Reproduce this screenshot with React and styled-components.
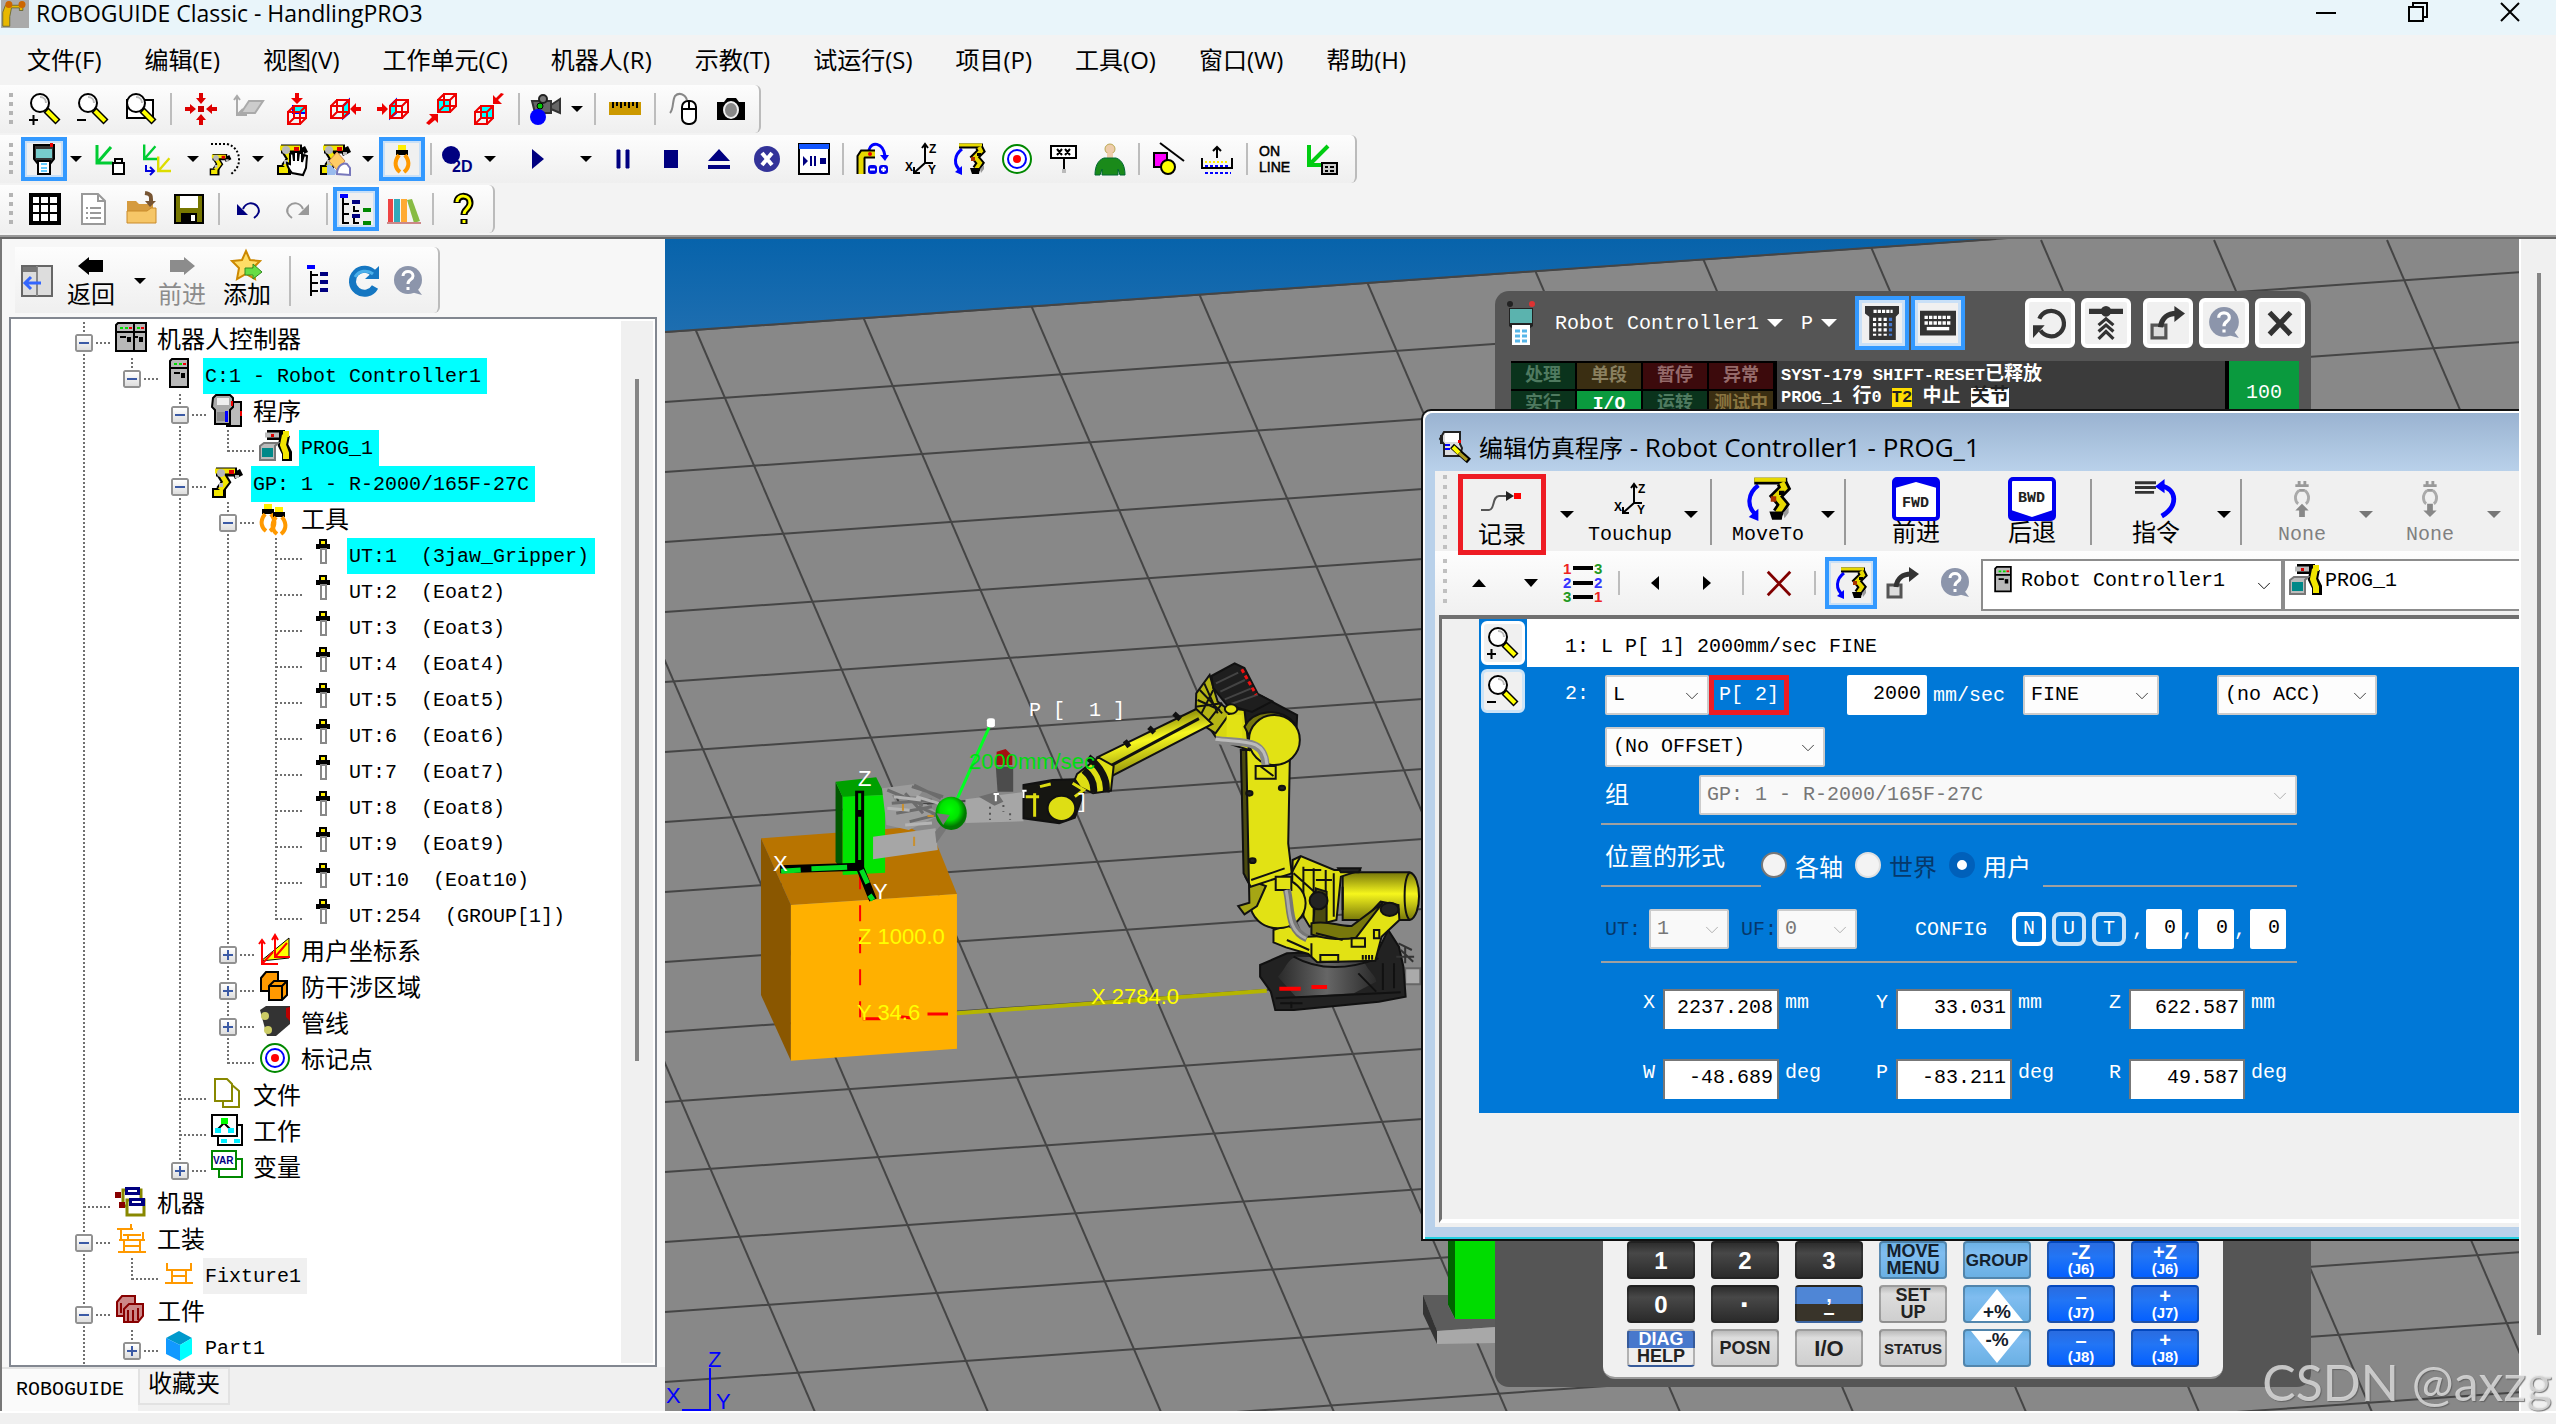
import React, { useState } from 'react';
import styled, { createGlobalStyle, css } from 'styled-components';
import { ChevronDown } from 'lucide-react';

const mono = '"Liberation Mono", "Noto Sans CJK SC", monospace';
const ui = '"Open Sans", "Noto Sans CJK SC", sans-serif';

const GlobalStyle = createGlobalStyle`
  * {
    box-sizing: border-box;
  }
  body {
    margin: 0;
    background: #f0f0f0;
    font-family: ${mono};
    font-size: 20px;
    color: #000;
    overflow: hidden;
  }
  button, input, select {
    font: inherit;
    color: inherit;
    margin: 0;
    padding: 0;
    border: 0;
    background: none;
  }
`;

/* ---------- frame ---------- */

const Page = styled.div`
  display: flex;
  flex-direction: column;
  height: 100vh;
`;

const TitleBar = styled.header`
  display: flex;
  align-items: flex-start;
  height: 35px;
  background: #e9f5fa;
  font-family: ${ui};
`;

const AppTitle = styled.h1`
  flex: 1;
  margin: 0 0 0 6px;
  font-size: 23px;
  font-weight: 400;
  line-height: 26px;
`;

const CaptionButton = styled.button`
  width: 92px;
  height: 24px;
  display: flex;
  align-items: center;
  justify-content: center;
`;

const MenuBar = styled.nav`
  display: flex;
  align-items: center;
  gap: 43px;
  height: 50px;
  padding-left: 27px;
  background: #f3f3f3;
  font-family: ${ui};
`;

const MenuItem = styled.button`
  font-size: 24px;
  line-height: 32px;
  white-space: nowrap;
`;

const ToolArea = styled.div`
  display: flex;
  flex-direction: column;
  align-items: flex-start;
  gap: 2px;
  padding-bottom: 2px;
  background: #f3f3f3;
  border-bottom: 2px solid #999;
  box-shadow: 0 2px 0 #666;
  z-index: 1;
`;

const Strip = styled.div`
  display: flex;
  align-items: center;
  height: 48px;
  padding: 0 6px 0 21px;
  border-right: 2px solid #bbb;
  border-radius: 0 6px 6px 0;
  background:
    repeating-linear-gradient(#b4b4b4 0 4px, transparent 4px 9px) 9px 8px / 4px 32px no-repeat,
    linear-gradient(#fdfdfd, #efefef);
`;

const ToolButton = styled.button`
  display: flex;
  align-items: center;
  justify-content: center;
  flex: none;
  width: ${p => p.$w || 48}px;
  height: 44px;
  ${p => p.$active && css`
    width: ${p.$w || 46}px;
    border: 4px solid #3399ff;
    box-shadow: inset 0 0 0 2px #c9e0f7;
    background: #f0f0f0;
  `}
`;

const ToolSep = styled.span`
  width: 12px;
  height: 32px;
  background: linear-gradient(#bdbdbd, #bdbdbd) 5px 0 / 2px 100% no-repeat;
`;

const Arrow = styled.span`
  display: inline-block;
  border: 6px solid transparent;
  border-top: 6px solid ${p => p.$color || '#000'};
  border-bottom: 0;
`;

const Main = styled.main`
  display: grid;
  grid-template-columns: 665px 1fr 37px;
  flex: 1;
  min-height: 0;
  padding-top: 2px;
`;

const StatusBar = styled.footer`
  height: 13px;
  border-top: 2px solid #fff;
  background: #f0f0f0;
`;

const Rail = styled.div`
  display: flex;
  justify-content: center;
  padding: 34px 0 76px;
  border-left: 2px solid #fff;
  background: #f0f0f0;
`;

const Thumb = styled.span`
  width: 4px;
  height: ${p => p.$h || '100%'};
  background: #858585;
`;

/* ---------- cell browser ---------- */

const Side = styled.aside`
  display: flex;
  flex-direction: column;
  min-height: 0;
  padding: 8px 8px 0;
  border-left: 2px solid #777;
  background: #f7f7f7;
`;

const SideTools = styled.div`
  display: flex;
  align-items: center;
  align-self: flex-start;
  height: 66px;
  margin: 0 0 4px 5px;
  padding: 2px 5px 0 6px;
  border-right: 2px solid #bbb;
  border-radius: 0 6px 6px 0;
  background: linear-gradient(#fdfdfd, #efefef);
`;

const SideButton = styled.button`
  display: grid;
  grid-template-rows: ${p => (p.$stack ? '32px 30px' : '62px')};
  align-items: center;
  justify-items: center;
  width: ${p => p.$w}px;
  height: 62px;
  font-size: 24px;
  line-height: 30px;
  white-space: nowrap;
  color: ${p => (p.disabled ? '#8c8c8c' : '#000')};
`;

const SideSep = styled.span`
  width: 2px;
  height: 50px;
  margin-left: 8px;
  background: #bdbdbd;
`;

const TreeBox = styled.div`
  display: flex;
  flex: 1;
  min-height: 0;
  overflow: hidden;
  margin-left: -1px;
  padding: 2px;
  border: 2px solid #828790;
  background: #fff;
`;

const Tree = styled.ul`
  flex: 1;
  margin: 0;
  padding: 1px 0 0 47px;
  list-style: none;
`;

const TreeScroll = styled.div`
  display: flex;
  justify-content: center;
  width: 32px;
  padding-top: 58px;
  background: #f0f0f0;
`;

const TreeRow = styled.li`
  display: flex;
  height: 36px;
`;

const dotsY = 'repeating-linear-gradient(#707070 0 2px, transparent 2px 4px)';
const dotsX = 'repeating-linear-gradient(90deg, #707070 0 2px, transparent 2px 4px)';

const Guide = styled.span`
  width: 48px;
  background: ${p => (p.$line ? `${dotsY} 23px 0 / 2px 36px no-repeat` : 'none')};
`;

const Branch = styled.span`
  width: 55px;
  padding: 12px 0 0 15px;
  background:
    ${dotsY} 23px 0 / 2px ${p => (p.$last ? 22 : 36)}px no-repeat,
    ${dotsX} 24px 20px / 28px 2px no-repeat;
`;

const Expander = styled.button`
  display: flex;
  align-items: center;
  justify-content: center;
  width: 18px;
  height: 18px;
  border: 2px solid #919191;
  border-radius: 2px;
  background: linear-gradient(#fff, #dedede);
  outline: 2px solid #fff;
`;

const TreeLabel = styled.span`
  height: 36px;
  margin-left: 8px;
  padding: ${p => (p.$cjk ? 2 : 0)}px 6px 0 2px;
  line-height: ${p => (p.$cjk ? 36 : 38)}px;
  white-space: pre;
  font-size: ${p => (p.$cjk ? 24 : 20)}px;
  background: ${p => p.$bg || 'transparent'};
`;

const Tabs = styled.div`
  display: flex;
  align-items: flex-start;
  height: 44px;
  margin: 0 -8px;
  background: #f0f0f0;
`;

const Tab = styled.button`
  height: ${p => (p.$on ? 44 : 38)}px;
  padding: 0 ${p => (p.$on ? 14 : 8)}px;
  font-size: ${p => (p.$on ? 20 : 24)}px;
  background: ${p => (p.$on ? '#fafafa' : '#f3f3f3')};
  border: ${p => (p.$on ? 0 : '2px solid #e2e2e2')};
  border-top: 2px solid #e2e2e2;
  line-height: 34px;
`;

/* ---------- 3D view ---------- */

const View = styled.section`
  position: relative;
  overflow: hidden;
  background: #888;
`;

const SceneSvg = styled.svg`
  position: absolute;
  inset: 0;
  width: 100%;
  height: 100%;

  .thin * {
    vector-effect: non-scaling-stroke;
  }
  text {
    font: 22px "Liberation Sans", sans-serif;
  }
  .mono {
    font: 20px "Liberation Mono", monospace;
    white-space: pre;
  }
`;

/* ---------- teach pendant ---------- */

const Pendant = styled.section`
  position: absolute;
  left: 830px;
  top: 52px;
  bottom: 24px;
  width: 816px;
  display: flex;
  flex-direction: column;
  border-radius: 14px;
  background: #555;
`;

const PendantHead = styled.div`
  display: flex;
  align-items: center;
  height: 64px;
  margin-bottom: 6px;
  padding: 0 6px 0 12px;
  color: #fff;
`;

const PendantMenu = styled.button`
  display: flex;
  align-items: center;
  gap: 8px;
  margin-left: 18px;

  ${Arrow} {
    border-width: 8px;
    border-top-color: #fff;
    border-bottom-width: 0;
  }
`;

const PendantToggle = styled.button`
  display: flex;
  align-items: center;
  justify-content: center;
  width: 54px;
  height: 54px;
  margin-left: ${p => (p.$first ? 18 : 2)}px;
  border: 4px solid #3399ff;
  box-shadow: inset 0 0 0 3px #c9e0f7;
  background: #f0f0f0;
`;

const PendantButtons = styled.div`
  display: flex;
  gap: 6px;
  margin-left: auto;
`;

const PendantButton = styled.button`
  display: flex;
  align-items: center;
  justify-content: center;
  width: 50px;
  height: 50px;
  margin-left: ${p => (p.$gap ? 6 : 0)}px;
  border: 4px solid #fff;
  border-radius: 6px;
  background: #f0f0f0;
`;

const Screen = styled.div`
  display: flex;
  flex: 1;
  min-height: 0;
  margin: 0 12px 0 16px;
  background: #000;
`;

const Lamps = styled.div`
  display: grid;
  grid-template-columns: repeat(4, 64px);
  grid-auto-rows: 26px;
  gap: 2px;
  padding-top: 2px;
  margin-right: 4px;
`;

const Lamp = styled.span`
  font-size: 18px;
  font-weight: 700;
  line-height: 26px;
  text-align: center;
  color: ${p => p.$color};
  background: ${p => p.$bg};
`;

const Message = styled.div`
  flex: 1;
  padding: 4px;
  font-size: 17px;
  font-weight: 700;
  line-height: 22px;
  color: #fff;
  background: #3b3b3b;
  white-space: pre;

  big {
    font-size: 19px;
    line-height: 20px;
  }
`;

const Flag = styled.mark`
  color: #222;
  background: ${p => p.$bg};
`;

const Override = styled.div`
  width: 70px;
  margin-left: 4px;
  padding-top: 20px;
  line-height: 24px;
  text-align: center;
  color: #fff;
  background: #0a9a3e;
`;

const Keypad = styled.div`
  display: grid;
  grid-template-columns: repeat(7, 68px);
  grid-auto-rows: 38px;
  gap: 6px 16px;
  margin: 0 88px 8px 108px;
  padding: 6px 24px 10px;
  border-bottom: 2px solid #999;
  border-radius: 0 0 12px 12px;
  background: #f0f0f0;
  font-family: "Liberation Sans", sans-serif;
`;

const keyLook = {
  dark: 'background: linear-gradient(#2d2d2d, #484848 30%, #2b2b2b); color: #fff;',
  gray: 'background: linear-gradient(#bbb, #ddd 20%, #cfcfcf); color: #222;',
  sky: 'background: linear-gradient(#6cb2e6, #80bdf0 30%, #6ab0e4); color: #14202c;',
  blue: 'background: linear-gradient(#2a6ce0, #2275f5 40%, #0460ff); color: #fff;',
  diag: 'background: linear-gradient(#4878cc 50%, #eee 50%); color: #fff;',
  comma: 'background: linear-gradient(#4f86d6 50%, #39342a 50%); color: #fff;',
};

const Key = styled.button`
  display: flex;
  flex-direction: column;
  align-items: center;
  justify-content: center;
  overflow: hidden;
  border-radius: 4px;
  border: 2px solid rgba(0, 0, 0, 0.25);
  font-size: ${p => p.$size || 17}px;
  font-weight: 700;
  line-height: ${p => p.$lh || 16}px;
  white-space: nowrap;
  ${p => keyLook[p.$look]}

  small {
    font-size: 15px;
    line-height: 15px;
  }
`;

const DarkText = styled.span`
  color: #222;
`;

// the speed keys carry a white triangle behind their label
const Percent = styled.span`
  display: grid;
  justify-items: center;
  align-items: ${p => (p.$up ? 'end' : 'start')};
  width: 64px;
  height: 34px;
  font-size: 19px;
  line-height: 18px;

  &::before {
    content: '';
    grid-area: 1 / 1;
    width: 52px;
    height: 32px;
    background: #fff;
    clip-path: ${p => (p.$up ? 'polygon(50% 0, 100% 100%, 0 100%)' : 'polygon(0 0, 100% 0, 50% 100%)')};
  }
  span {
    grid-area: 1 / 1;
    z-index: 1;
  }
`;

/* ---------- program editor ---------- */

const Editor = styled.section`
  position: absolute;
  left: 756px;
  right: 0;
  top: 170px;
  display: flex;
  flex-direction: column;
  padding: 2px 0 12px 12px;
  border: solid #111;
  border-width: 2px 0 2px 2px;
  border-radius: 10px 0 0 0;
  background: #b9d1ea;
  box-shadow: inset 2px 2px 0 #fff, inset 0 -2px 0 #22d0e0;
`;

const EditorTitle = styled.h2`
  display: flex;
  align-items: center;
  gap: 8px;
  height: 58px;
  margin: 0 0 0 -10px;
  padding: 10px 0 0 14px;
  border-radius: 8px 0 0 0;
  background: linear-gradient(#9ab3d1, #b9d1ea);
  font-family: ${ui};
  font-size: 24px;
  font-weight: 400;
  white-space: pre;

  span {
    font-size: 26px;
  }
`;

const EditorBody = styled.div`
  background: #f0f0f0;
`;

const grip = 'repeating-linear-gradient(#c0c0c0 0 4px, transparent 4px 10px)';

const BigTools = styled.div`
  display: flex;
  height: 80px;
  padding: 3px 0 0 23px;
  background: ${grip} 8px 4px / 4px 74px no-repeat;
`;

const BigButton = styled.button`
  display: grid;
  grid-template-rows: 44px 28px;
  align-items: center;
  justify-items: center;
  flex: none;
  width: ${p => p.$w}px;
  height: 76px;
  padding-top: 3px;
  font-size: ${p => (p.$cjk ? 24 : 20)}px;
  line-height: 28px;
  white-space: nowrap;
  color: ${p => (p.disabled ? '#808080' : '#000')};
  ${p => p.$marked && css`
    height: 81px;
    padding-top: 0;
    border: 5px solid #ee1c24;
    z-index: 1;
  `}
`;

const BigDrop = styled.button`
  display: flex;
  align-items: center;
  justify-content: center;
  width: ${p => p.$w || 32}px;
  height: 80px;

  ${Arrow} {
    border-width: 7px;
    border-bottom-width: 0;
  }
`;

const BigSep = styled.span`
  width: 14px;
  height: 66px;
  margin-top: 5px;
  background: linear-gradient(#999, #999) 0 0 / 2px 100% no-repeat;
`;

const SmallTools = styled.div`
  display: flex;
  align-items: center;
  height: 64px;
  padding-left: 18px;
  background:
    ${grip} 8px 8px / 4px 46px no-repeat,
    linear-gradient(#fdfdfd, #f0f0f0);
`;

const SmallButton = styled(ToolButton)`
  width: 52px;
  height: 52px;
`;

const SmallSep = styled.span`
  width: 20px;
  height: 24px;
  background: linear-gradient(#bdbdbd, #bdbdbd) 9px 0 / 2px 100% no-repeat;
`;

const Picker = styled.label`
  position: relative;
  display: flex;
  align-items: center;
  flex: ${p => (p.$grow ? '1' : '0 0 302px')};
  height: 52px;
  margin-top: 4px;
  padding: 0 0 10px ${p => (p.$grow ? 4 : 6)}px;
  border: 2px solid #8c8c8c;
  border-right-width: ${p => (p.$grow ? 0 : 2)}px;
  background: #fff;

  select {
    flex: 1;
    height: 38px;
    padding-left: 4px;
    appearance: none;
  }
  svg.lucide {
    position: absolute;
    right: 6px;
    top: 14px;
  }
`;

const ListArea = styled.div`
  display: flex;
  height: 608px;
  margin: 0 0 4px 4px;
  padding-left: 37px;
  border: solid #707070;
  border-width: 4px 0 0 3px;
  border-bottom: 4px solid #fff;
  background: #f0f0f0;
`;

const ZoomColumn = styled.div`
  display: flex;
  flex-direction: column;
  gap: 4px;
  width: 48px;
  height: 494px;
  padding: 2px;
  background: #0078d7;
`;

const ZoomButton = styled.button`
  display: flex;
  align-items: center;
  justify-content: center;
  width: 44px;
  height: 44px;
  border: 3px solid ${p => (p.$pressed ? '#cce4f7' : '#fff')};
  border-radius: 6px;
  background: #f0f0f0;
`;

const Lines = styled.div`
  flex: 1;
`;

const PlainLine = styled.div`
  height: 48px;
  padding: 4px 0 0 38px;
  line-height: 48px;
  white-space: pre;
  background: #fff;
`;

const EditLine = styled.div`
  display: flex;
  height: 446px;
  padding: 8px 0 0 38px;
  color: #fff;
  background: #0078d7;
`;

const LineNo = styled.span`
  width: 36px;
  line-height: 38px;
`;

const Form = styled.form`
  display: flex;
  flex-direction: column;
  width: 696px;
`;

const FieldRow = styled.div`
  display: flex;
  align-items: center;
  flex: none;
  height: 40px;
  padding-left: 4px;
  margin-bottom: ${p => p.$mb || 0}px;
  white-space: pre;

  > * {
    flex: none;
  }
`;

const SelectWrap = styled.span`
  position: relative;
  width: ${p => p.$w}px;
  height: 40px;
  margin-left: ${p => p.$ml || 0}px;
  color: ${p => (p.$off ? '#777' : '#000')};

  select {
    width: 100%;
    height: 40px;
    padding: 0 30px 2px 6px;
    border: 2px solid #ccc;
    border-radius: 2px;
    background: ${p => (p.$off ? '#f9f9f9' : '#fdfdfd')};
    appearance: none;
    opacity: 1;
  }
  svg {
    position: absolute;
    right: 6px;
    top: 10px;
    pointer-events: none;
  }
`;

const PointButton = styled.button`
  width: 80px;
  height: 40px;
  padding-bottom: 2px;
  border: 5px solid #ee1c24;
  white-space: pre;
`;

const TextBox = styled.input`
  width: ${p => p.$w}px;
  height: ${p => p.$h || 40}px;
  margin-left: ${p => p.$ml || 0}px;
  padding: 0 6px 4px 0;
  text-align: right;
  color: #000;
  background: #fff;
  border-radius: 2px;
`;

const Unit = styled.span`
  padding-left: 6px;
`;

const ConfigLabel = styled.span`
  padding: 0 25px 0 58px;
`;

const GroupLabel = styled.label`
  width: 94px;
  padding-bottom: 6px;
  font-size: 24px;
`;

const Rule = styled.hr`
  flex: none;
  width: 100%;
  height: 2px;
  margin: 0;
  border: 0;
  background: #a0a0a0;
`;

const PositionRow = styled.fieldset`
  display: flex;
  flex: none;
  height: 62px;
  min-width: 0;
  margin: 0 0 22px;
  padding: 0;
  border: 0;
  font-size: 24px;
`;

const PositionTitle = styled.span`
  width: 160px;
  padding: 8px 0 0 4px;
  line-height: 52px;
  white-space: nowrap;
  border-bottom: 2px solid #a0a0a0;
`;

const RadioLabel = styled.label`
  display: flex;
  align-items: center;
  gap: 8px;
  width: 94px;
  padding-top: 18px;
  color: ${p => (p.$off ? '#06386b' : '#fff')};

  input {
    appearance: none;
    width: 26px;
    height: 26px;
    border: 2px solid #777;
    border-radius: 50%;
    background: #f3f3f3;
  }
  input:disabled {
    border-color: #e0e0e0;
  }
  input:checked {
    border: 8px solid #0060ba;
    background: #fff;
  }
`;

const PositionEnd = styled.span`
  flex: 1;
  border-bottom: 2px solid #a0a0a0;
`;

const OffLabel = styled.label`
  width: ${p => p.$w}px;
  color: #06386b;
`;

const FlipButton = styled.button`
  width: 34px;
  height: 34px;
  margin-right: 6px;
  border: 4px solid ${p => (p.$on ? '#fff' : '#cce4f7')};
  border-radius: 8px;
  line-height: 24px;
`;

const Coords = styled.div`
  display: grid;
  grid-template-columns: repeat(3, 233px);
  row-gap: 30px;
  padding: 26px 0 0 42px;
`;

const Coord = styled.label`
  display: flex;
  height: 40px;
  line-height: 28px;

  > span:first-child {
    width: 20px;
  }
  input {
    border: 2px solid #777;
    border-bottom: 0;
    border-radius: 0;
    padding: 0 4px 6px 0;
  }
`;

const Watermark = styled.div`
  position: fixed;
  right: 4px;
  bottom: 4px;
  font-family: "Lato", sans-serif;
  font-size: 50px;
  line-height: 76px;
  color: rgba(235, 235, 235, 0.75);
  text-shadow: 1px 1px 1px rgba(90, 90, 90, 0.8);
`;

/* ---------- icons ---------- */

const Svg = ({ s = 32, h, v = 32, vh, children }) => (
  <svg width={s} height={h || s} viewBox={`0 0 ${v} ${vh || v}`} fill="none" overflow="visible" aria-hidden="true">
    {children}
  </svg>
);

const Lens = ({ sign }) => (
  <>
    <path d="M17 17l12 12" stroke="#000" strokeWidth="7" />
    <path d="M18 18l10 10" stroke="#ff0" strokeWidth="4" />
    <circle cx="11" cy="10" r="9" fill="#fff" stroke="#000" strokeWidth="2" />
    <path d="M11 4c4 0 6 3 6 6" stroke="#bbb" strokeWidth="2" />
    {sign && <path d="M0 27h9" stroke="#000" strokeWidth="2" />}
    {sign === '+' && <path d="M4.500 22v10" stroke="#000" strokeWidth="2" />}
  </>
);

const Cube = ({ x = 6, y = 12, face = 'back' }) => (
  <g transform={`translate(${x} ${y})`} strokeWidth="2">
    {face === 'top' && <path d="M6 1h13v7H6z" fill="#0ff" stroke="#00f" />}
    {face === 'right' && <path d="M13 7l6-6v13l-6 5z" fill="#0ff" stroke="#00f" />}
    {face === 'left' && <path d="M1 7l6-6v13l-6 5z" fill="#0ff" stroke="#00f" />}
    {face === 'front' && <path d="M1 7h12v12H1z" fill="#0ff" stroke="#00f" />}
    {face === 'back' && <path d="M7 1h12v12H7z" fill="#0ff" stroke="#00f" />}
    <path d="M1 7h12v12H1zM7 1h12v12H7zM1 7l6-6M13 7l6-6M1 19l6-6M13 19l6-6" stroke="#e00" />
  </g>
);

const MiniRobot = () => (
  <>
    <path d="M10 8l5 8-6 8" stroke="#000" strokeWidth="9" />
    <path d="M5 6h21M25 5l3 6" stroke="#000" strokeWidth="9" />
    <path d="M1 22h14v10H1z" fill="#000" />
    <path d="M10 8l5 8-6 8" stroke="#f2e600" strokeWidth="5" />
    <path d="M4 5h20" stroke="#f2e600" strokeWidth="5" />
    <path d="M3 24h9v6H3z" fill="#f2e600" />
    <circle cx="10" cy="7" r="4" fill="#b8b8b8" />
    <path d="M18 4h5v4h-5z" fill="#d00" />
    <path d="M24 9h4v3h-4zM8 17h4v4H8z" fill="#bbb" />
  </>
);

const AxisTri = ({ c }) => <path d="M4 2v18h16M5 19L18 4M4 8v12h12" stroke={c} strokeWidth="3" />;

const MoveRobot = () => (
  <>
    <path d="M9 6C1 12 0 22 8 28" stroke="#00f" strokeWidth="3" />
    <path d="M9 23v9l-7-3z" fill="#00f" />
    <path d="M6 3h24" stroke="#000" strokeWidth="5" />
    <path d="M26 4l2 4-6 6 5 6-4 6" stroke="#000" strokeWidth="8" />
    <path d="M6 2h23" stroke="#e6d800" strokeWidth="3" />
    <path d="M26 4l2 4-6 6 5 6-4 6" stroke="#e6d800" strokeWidth="4" />
    <path d="M17 25h10l-1 6h-7zM24 10h4v3h-4z" fill="#000" />
    <path d="M18 14h4v4h-4z" fill="#a30" />
    <path d="M27 26l4-4v4l-3 4z" fill="#999" />
  </>
);

const Grippers = ({ x }) => (
  <g transform={`translate(${x} 0)`}>
    <path d="M5 2h8v5H5z" fill="#fe0" />
    <path d="M3 7h12v5H3z" fill="#000" />
    <path d="M6 12c-6 8-3 14 1 17M12 12c6 8 3 14-1 17" stroke="#f90" strokeWidth="4" />
  </g>
);

const Server = ({ x = 0 }) => (
  <g transform={`translate(${x} 0)`}>
    <path d="M1 3l2-2h16v28H1z" fill="#b8b8b8" stroke="#000" strokeWidth="2" />
    <path d="M1 10h18M5 15h6" stroke="#000" strokeWidth="2" />
    <path d="M5 5h3v2H5zM10 5h3v2h-3z" fill="#0d0" />
    <path d="M14 5h3v2h-3z" fill="#e00" />
    <path d="M12 15h4v5h-4z" fill="#000" />
  </g>
);

const Question = () => (
  <>
    <circle cx="16" cy="15" r="14" fill="#8c95ab" />
    <path d="M24 22l6 8-11-3z" fill="#8c95ab" />
    <path d="M11 11c0-6 10-6 10 0 0 4-5 3-5 8M16 22v3" stroke="#fff" strokeWidth="3" />
  </>
);

const icons = {
  app: <><path d="M0 0h32v32H0z" fill="#aaa" /><path d="M2 30V14l3-8h20v6h-4V9H12l-2 10v11z" fill="#e8b800" stroke="#663" strokeWidth="1" /><circle cx="9" cy="5" r="4" fill="#c60" /><circle cx="24" cy="5" r="4" fill="#c60" /></>,
  zoomIn: <Lens sign="+" />,
  zoomOut: <Lens sign="-" />,
  zoomWin: <><path d="M2 7h26v18H2z" fill="#fff" stroke="#000" strokeWidth="2" /><Lens /></>,
  center: <><g fill="#d00"><path d="M14 0h4v5h3l-5 6-5-6h3zM14 32h4v-5h3l-5-6-5 6h3zM0 14v4h5v3l6-5-6-5v3zM32 14v4h-5v3l-6-5 6-5v3z" /></g><path d="M13 13h6v6h-6z" fill="#c00" /></>,
  plane: <><path d="M8 20l8-12h14l-8 12z" fill="#ccc" stroke="#aaa" strokeWidth="2" /><path d="M4 4v18h10M4 22l6-6M1 7l3-4 3 4" stroke="#aaa" strokeWidth="2" /></>,
  top: <><path d="M14 0h4v5h4l-6 6-6-6h4z" fill="#e00" /><Cube x={6} y={12} face="top" /></>,
  right: <><Cube x={1} y={6} face="right" /><path d="M32 14v4h-5v4l-6-6 6-6v4z" fill="#e00" /></>,
  left: <><Cube x={12} y={6} face="left" /><path d="M0 14v4h5v4l6-6-6-6v4z" fill="#e00" /></>,
  front: <><Cube x={12} y={0} face="front" /><path d="M1 30l6-6-3-3h9v9l-3-3-6 5z" fill="#e00" /></>,
  back: <><Cube x={1} y={12} face="back" /><path d="M31 1l-6 6 4 4h-9V2l3 3 5-5z" fill="#e00" /></>,
  video: <><path d="M3 8h19v12H6zM22 12l9-6v14l-9-4z" fill="#666" stroke="#333" strokeWidth="2" /><circle cx="14" cy="6" r="4" fill="#777" stroke="#222" strokeWidth="2" /><circle cx="11" cy="13" r="3" fill="#0c0" stroke="#000" /><circle cx="9" cy="24" r="8" fill="#00f" /></>,
  ruler: <><path d="M0 9h32v13H0z" fill="#c90" /><path d="M4 9v6M8 9v4M12 9v6M16 9v4M20 9v6M24 9v4M28 9v6" stroke="#000" strokeWidth="2" /></>,
  mouse: <><path d="M1 20c4-4 2-12 5-17 4-4 10-2 12 4" stroke="#888" strokeWidth="2" /><rect x="13" y="8" width="14" height="23" rx="6" fill="#fff" stroke="#000" strokeWidth="2" /><path d="M13 16h14M20 8v8" stroke="#000" strokeWidth="2" /></>,
  photo: <><path d="M2 9h7l3-4h9l3 4h6v18H2z" fill="#000" /><ellipse cx="16" cy="17" rx="7" ry="8" fill="#888" stroke="#eee" strokeWidth="2" /></>,
  pendant: <><path d="M6 2h20v14l-4 5H10l-4-5z" fill="#333" stroke="#000" strokeWidth="2" /><path d="M8 6h16v9H8z" fill="#7cc" /><path d="M10 18h12v13H10z" fill="#fff" stroke="#000" strokeWidth="2" /><path d="M13 21h6M13 25h6M13 28h6" stroke="#6cf" strokeWidth="2" /><path d="M22 0h3v4h-3z" fill="#e00" /></>,
  axisLock: <><AxisTri c="#0c3" /><path d="M20 20h11v11H20z" fill="#fff" stroke="#000" strokeWidth="2" /><path d="M22 20v-4h7v4" stroke="#000" strokeWidth="2" /></>,
  axisTwo: <><g transform="scale(.8)"><AxisTri c="#0c3" /></g><g transform="translate(14 12) scale(.8)"><AxisTri c="#dd0" /></g><path d="M5 22v6h7M9 24l4 4-4 4" stroke="#00d" strokeWidth="2" /></>,
  teachRobot: <><g transform="translate(0 10) scale(.7)"><MiniRobot /></g><path d="M2 1h16c8 2 12 8 12 16 0 6-3 10-8 14" stroke="#000" strokeWidth="2" strokeDasharray="2 2" /></>,
  handRobot: <><MiniRobot /><path d="M16 30c-3-4-5-6-5-10l3 1V11l3-1 1 8v-9l4 0v9l1-8h3v9l2-7 3 1-1 12-3 7z" fill="#fff" stroke="#000" strokeWidth="2" /></>,
  handRobot2: <><MiniRobot /><path d="M18 9l8 9-8 9-8-9z" fill="#fc6" stroke="#c85" /><path d="M8 22c4-3 6 4 10 6l-2 4H8z" fill="#9be" /><path d="M18 31c0-8 6-12 10-10l3 4v7z" fill="#fff" stroke="#77b" strokeWidth="2" /></>,
  gripper: <Grippers x={7} />,
  rec2d: <><circle cx="10" cy="12" r="9" fill="#000080" /><text x="11" y="29" fontSize="16" fontFamily="Liberation Sans" fontWeight="700" fill="#000080">2D</text></>,
  play: <path d="M10 6l12 10-12 10z" fill="#000080" />,
  pause: <path d="M10 7h3v18h-3zM19 7h3v18h-3z" fill="#000080" stroke="#000080" />,
  stop: <path d="M9 7h14v18H9z" fill="#000080" />,
  eject: <path d="M16 6l11 12H5zM5 22h22v4H5z" fill="#000080" />,
  abort: <><circle cx="16" cy="16" r="13" fill="#339" /><path d="M11 10l10 12M21 10L11 22" stroke="#fff" strokeWidth="4" /></>,
  runPanel: <><path d="M1 1h30v30H1z" fill="#fff" stroke="#000" strokeWidth="2" /><path d="M1 1h30v5H1z" fill="#15f" /><path d="M5 13l5 5-5 5zM12 13h2v10h-2zM16 13h2v10h-2zM22 15h6v6h-6z" fill="#000080" /></>,
  jogPM: <><path d="M12 7C14-2 26-1 28 13" stroke="#00f" strokeWidth="3" /><path d="M23 12h9l-4 6z" fill="#00f" /><path d="M4 31V14l2-3h12" stroke="#000" strokeWidth="9" /><path d="M4 31V14l2-3h12" stroke="#e6d800" strokeWidth="5" /><circle cx="13" cy="11" r="2" fill="#e00" /><rect x="11" y="22" width="9" height="9" rx="3" fill="#00e" /><rect x="22" y="22" width="9" height="9" rx="3" fill="#00e" /><path d="M13 26.500h5M24 26.500h5M26.500 24v5" stroke="#fff" strokeWidth="2" /></>,
  axes: <><path d="M20 20V2M17 5l3-4 3 4M20 20h8M20 20L10 29M9 24v6h6" stroke="#000" strokeWidth="2" /><g fontSize="12" fontFamily="Liberation Sans" fontWeight="700" fill="#000"><text x="24" y="10">Z</text><text x="0" y="28">X</text><text x="23" y="31">Y</text></g></>,
  moveTo: <MoveRobot />,
  target: <><circle cx="16" cy="16" r="14" fill="#fff" stroke="#080" strokeWidth="2" /><circle cx="16" cy="16" r="9" stroke="#00f" strokeWidth="2" /><circle cx="16" cy="16" r="4" fill="#f00" /></>,
  sign: <><path d="M3 3h25v12H3zM16 15v12" fill="#fff" stroke="#000" strokeWidth="2" /><path d="M9 6l5 6M14 6l-5 6M17 6l5 6M22 6l-5 6" stroke="#000" strokeWidth="2" /><path d="M14 26h4v4h-4z" fill="#bbb" /></>,
  person: <><circle cx="16" cy="6" r="5" fill="#eca" stroke="#ba5" /><path d="M13 10h6v5h-6z" fill="#eca" /><path d="M1 32c0-9 3-15 9-17h12c6 2 9 8 9 17h-5l-2-6v6H8v-6l-2 6z" fill="#1a8a1a" stroke="#063" strokeWidth="1" /></>,
  shapes: <><path d="M1 10h13v14H1z" fill="#f0f" stroke="#000" strokeWidth="2" /><circle cx="15" cy="24" r="7" fill="#ff0" stroke="#000" strokeWidth="2" /><path d="M7 0l24 18" stroke="#000" strokeWidth="2" /></>,
  floor: <><path d="M1 15v10h30V15M16 15V5M12 8l4-4 4 4" stroke="#000" strokeWidth="2" /><path d="M4 19h24" stroke="#fe0" strokeWidth="2" strokeDasharray="2 2" /><path d="M4 23h24M4 30h26" stroke="#00f" strokeWidth="2" strokeDasharray="3 2" /></>,
  online: <g fontSize="14" fontFamily="Liberation Sans" fill="#000" stroke="#000" strokeWidth=".5"><text x="1" y="13">ON</text><text x="1" y="29">LINE</text></g>,
  axisPrint: <><path d="M3 2v20h14M3 22L22 3" stroke="#0c1" strokeWidth="4" /><path d="M16 20h15v11H16z" fill="#ccc" stroke="#000" strokeWidth="2" /><path d="M19 24h3M24 24h4M19 28h3M24 28h4" stroke="#000" strokeWidth="2" /></>,
  grid: <><path d="M2 2h28v28H2z" fill="#fff" stroke="#000" strokeWidth="4" /><path d="M11 2v28M20 2v28M2 11h28M2 20h28" stroke="#000" strokeWidth="2" /></>,
  doc: <><path d="M5 1h16l7 7v23H5z" fill="#fff" stroke="#999" strokeWidth="2" /><path d="M21 1v7h7M9 15h2M9 20h2M9 25h2M13 15h11M13 20h11M13 25h11" stroke="#999" strokeWidth="2" /></>,
  folder: <><path d="M2 8h9l3 3h14v18H2z" fill="#d59b3f" /><path d="M2 30V18h20l4-3h5v15z" fill="#f6c667" stroke="#c98a2b" /><path d="M20 0c7 1 6 4 6 8" stroke="#753" strokeWidth="4" /><path d="M20 8h11l-6 6z" fill="#753" /></>,
  save: <><path d="M2 2h28v28H2z" fill="#770" stroke="#000" strokeWidth="2" /><path d="M7 3h18v12H7z" fill="#fff" /><path d="M8 20h16v10H8z" fill="#000" /><path d="M18 22h4v6h-4z" fill="#fff" /></>,
  undo: <><path d="M10 16c3-7 10-7 14-3 4 5 1 9-3 12" stroke="#000080" strokeWidth="2" /><path d="M4 11v11h11z" fill="#000080" /></>,
  redo: <><path d="M22 16c-3-7-10-7-14-3-4 5-1 9 3 12" stroke="#999" strokeWidth="2" /><path d="M28 11v11H17z" fill="#999" /></>,
  treeView: <><path d="M3 5v25h6M3 11h6M3 21h6M14 13v5h5M14 24v6h5" stroke="#000" strokeWidth="2" /><path d="M0 1h8v4H0z" fill="#00f" /><path d="M12 7h8v4h-8zM12 21h8v4h-8z" fill="#000080" /><path d="M23 15h8v4h-8zM23 28h8v4h-8z" fill="#080" /></>,
  books: <><path d="M1 6h5v23H1z" fill="#e44" /><path d="M7 6h6v23H7z" fill="#3ab" /><path d="M14 6h6v23h-6z" fill="#fa3" /><path d="M20 7l5-1 8 22-6 2z" fill="#8b4" /><path d="M0 30h34" stroke="#c88" strokeWidth="2" /></>,
  help: <><path d="M10 10c0-9 13-9 13 0 0 6-6 6-6 12M17 26v5" stroke="#000" strokeWidth="7" /><path d="M10 9c0-8 13-8 13 1 0 6-6 6-6 11M17 27v3" stroke="#ff0" strokeWidth="3" /></>,
  collapse: <><path d="M1 1h30v30H1z" fill="#ddd" stroke="#666" strokeWidth="2" /><path d="M16 1v30" stroke="#888" strokeWidth="2" /><path d="M2 2h14v5H2z" fill="#777" /><path d="M20 18H4M10 12l-6 6 6 6" stroke="#36f" strokeWidth="3" /></>,
  treeSmall: <><path d="M9 6v25M9 10h7M9 18h7M9 26h7" stroke="#000" strokeWidth="2" /><path d="M5 0h8v4H5z" fill="#00f" /><path d="M18 7h8v4h-8zM18 15h8v4h-8zM18 23h8v4h-8z" fill="#000080" /></>,
  refresh: <><path d="M27 22A12 12 0 1 1 26 9" stroke="#1577c2" strokeWidth="7" /><path d="M31 1v13H17z" fill="#1577c2" /><path d="M25 9A12 12 0 0 0 7 12" stroke="#4cb0ea" strokeWidth="3" /></>,
  question: <Question />,
  servers: <><Server x={12} /><Server /></>,
  server: <Server x={6} />,
  pendants: <><path d="M16 8h14v24H16z" fill="#bbb" stroke="#000" strokeWidth="2" /><path d="M2 4l3-3h14l3 3v9l-3 3v14H4V16l-3-3z" fill="#aaa" stroke="#000" strokeWidth="2" /><path d="M6 4h12v7H6z" fill="#eee" /><path d="M6 18h8v9H6z" fill="#888" /><path d="M14 17h3v11h-3z" fill="#00f" /><path d="M20 7h2v5h-2zM29 17h2v5h-2z" fill="#e00" /></>,
  prog: <><path d="M8 5h18M26 5l-2 10 4 8v8" stroke="#000" strokeWidth="10" /><path d="M24 4h6M26 5l-2 10 3 8v6" stroke="#f2e600" strokeWidth="6" /><path d="M6 5h14" stroke="#bbb" strokeWidth="5" /><path d="M12 4h3v3h-3z" fill="#d00" /><path d="M1 16l4-3h14l-3 3v14H1z" fill="#bbb" stroke="#777" strokeWidth="2" /><path d="M3 18h11v9H3z" fill="#088" /></>,
  robot: <MiniRobot />,
  tools: <><Grippers x={0} /><g transform="translate(2 3)"><Grippers x={9} /></g></>,
  tool: <><path d="M13 2h6v5h-6z" fill="#fe0" stroke="#000" strokeWidth="2" /><path d="M9 6h14v5H9z" fill="#000" /><path d="M14 11h5v14h-5z" fill="#fff" stroke="#888" strokeWidth="2" /></>,
  frames: <><path d="M2 27L30 4v20z" fill="#ff0" stroke="#000" /><path d="M3 8v22h16M3 30L14 18M16 3v20h15M16 23l12-14M0 10l3-4 3 4M13 6l3-5 3 5" stroke="#f00" strokeWidth="2" /></>,
  boxes: <><path d="M2 8l5-6h12v13l-5 6H2z" fill="#f90" stroke="#000" strokeWidth="2" /><path d="M10 16l5-5h13v14l-5 5H10zM10 16h13v14M23 16l5-5" fill="#f90" stroke="#000" strokeWidth="2" /></>,
  pipes: <><path d="M1 4l6-4h24v18l-14 12H8z" fill="#333" /><circle cx="6" cy="10" r="4" fill="#cc6" /><circle cx="9" cy="24" r="4" fill="#cc6" /><path d="M27 2l4-1v14l-4-4z" fill="#b00" /></>,
  files: <><path d="M12 7h9l7 6v16H12z" fill="#fff" stroke="#880" strokeWidth="2" /><path d="M4 1h12l5 5v17H4z" fill="#fff" stroke="#880" strokeWidth="2" /></>,
  jobs: <><path d="M7 11h24v20H7z" fill="#fff" stroke="#000" strokeWidth="2" /><path d="M1 1h25v21H1z" fill="#fff" stroke="#000" strokeWidth="2" /><path d="M13 9l-6 6M13 9l6 6" stroke="#000" strokeWidth="2" /><path d="M10 4h7v6h-7z" fill="#0f0" /><path d="M4 14h6v5H4zM17 14h6v5h-6zM10 25h6v4h-6zM23 25h6v4h-6z" fill="#0ef" /></>,
  vars: <><path d="M8 9h23v18H8z" fill="#fff" stroke="#080" strokeWidth="2" /><path d="M1 1h24v18H1z" fill="#fff" stroke="#080" strokeWidth="2" /><text x="2" y="14" fontSize="10" fontFamily="Liberation Sans" fontWeight="700" fill="#000080">VAR</text></>,
  machines: <><path d="M8 4h18v16H8z" fill="#fff" stroke="#880" strokeWidth="3" /><path d="M12 14h17v15H12z" fill="#fff" stroke="#880" strokeWidth="3" /><path d="M10 1h15v8H10zM14 12h16v8H14z" fill="#000080" /><path d="M0 6h6v6H0zM4 16h6v6H4z" fill="#800" /><path d="M13 5h9M17 16h9" stroke="#fff" strokeWidth="2" /></>,
  fixtures: <path d="M2 7h16M6 7v12M16 2v5M8 13h18M4 18h26M9 18v11M25 18v11M3 30h28M9 24h16M28 10v8M13 13v5" stroke="#f90" strokeWidth="2" />,
  fixture: <path d="M4 5v6M28 5v6M3 12h26M9 12v12M23 12v12M9 18h14M2 25h28" stroke="#f90" strokeWidth="2" />,
  parts: <><path d="M2 8l5-6h13v14l-5 6H2z" fill="#c88" stroke="#800" strokeWidth="2" /><path d="M9 15l5-5h14v12l-5 6H9z" fill="#c88" stroke="#800" strokeWidth="2" /><path d="M13 16v11M18 16v11M23 14v12M6 9v10" stroke="#800" strokeWidth="2" /></>,
  part: <><path d="M3 8L16 1l13 7-12 7z" fill="#09c" /><path d="M3 8l14 7v16L3 24z" fill="#19f" /><path d="M29 8l-12 7v16l12-7z" fill="#0ff" /></>,
  editorApp: <><path d="M5 1h16v12l2 4-2 8H5V13L1 8z" fill="#ddd" stroke="#222" strokeWidth="2" /><path d="M1 4h3v9H1z" fill="#222" /><path d="M6 2h14v9H6z" fill="#fff" /><path d="M6 14h5M6 18h5" stroke="#00f" strokeWidth="2" /><path d="M19 9h3v3h-3z" fill="#e00" /><path d="M13 15l17 15" stroke="#000" strokeWidth="6" /><path d="M14 16l6 6" stroke="#ff0" strokeWidth="4" /><path d="M20 22l8 7" stroke="#a92" strokeWidth="3" /></>,
  record: <><path d="M0 27h8c6 0 3-14 10-14h10" stroke="#555" strokeWidth="2" /><path d="M25 8l8 5-8 5z" fill="#222" /><path d="M33 10h7v6h-7z" fill="#f00" /></>,
  fwd: <><rect x="1" y="1" width="44" height="40" rx="3" fill="#fff" stroke="#00e" strokeWidth="4" /><path d="M2 2h42v8L23 4 2 10z" fill="#00e" /><text x="9" y="29" fontSize="15" fontFamily="Liberation Mono" fontWeight="700" fill="#222">FWD</text></>,
  bwd: <><rect x="1" y="1" width="44" height="40" rx="3" fill="#fff" stroke="#00e" strokeWidth="4" /><path d="M2 40h42v-8l-21 7-21-7z" fill="#00e" /><text x="9" y="24" fontSize="15" fontFamily="Liberation Mono" fontWeight="700" fill="#222">BWD</text></>,
  instr: <><path d="M0 5h22M0 10h22M0 15h20" stroke="#333" strokeWidth="3" /><path d="M27 8c18 4 18 22 1 32" stroke="#00f" strokeWidth="5" /><path d="M21 9l10-8v15z" fill="#00f" /></>,
  openHand: <><path d="M8 2v5M14 2v5M4 7h14M8 12h6" stroke="#999" strokeWidth="3" /><path d="M8 12c-6 5-4 12-1 14M14 12c6 5 4 12 1 14" stroke="#aaa" strokeWidth="3" /><path d="M11 26l7 7h-4v7H8v-7H4z" fill="#888" /></>,
  closeHand: <><path d="M8 2v5M14 2v5M4 7h14M8 12h6" stroke="#999" strokeWidth="3" /><path d="M8 12c-6 5-4 12-1 14M14 12c6 5 4 12 1 14" stroke="#aaa" strokeWidth="3" /><path d="M11 40l7-7h-4v-7H8v7H4z" fill="#888" /></>,
  renumber: <><path d="M10 5h20M10 20h20M10 34h20" stroke="#000" strokeWidth="4" /><g fontSize="15" fontFamily="Liberation Sans" fontWeight="700"><text x="0" y="11" fill="#e22">1</text><text x="31" y="11" fill="#292">3</text><text x="0" y="25" fill="#33f">2</text><text x="31" y="25" fill="#33f">2</text><text x="0" y="39" fill="#292">3</text><text x="31" y="39" fill="#e22">1</text></g></>,
  del: <path d="M4 4l24 25M28 4L4 29" stroke="#800000" strokeWidth="3" />,
  popout: <><path d="M1 18h13v12H1z" fill="#ddd" stroke="#555" strokeWidth="3" /><path d="M9 20c1-9 7-13 15-13" stroke="#333" strokeWidth="5" /><path d="M22 0l10 7-10 8z" fill="#333" /></>,
  reload: <><path d="M6 12a12 12 0 1 1 1 11" stroke="#333" strokeWidth="4" /><path d="M0 30V18h11z" fill="#333" /></>,
  screenUp: <><path d="M0 5h32" stroke="#333" strokeWidth="5" /><circle cx="16" cy="5" r="5" fill="#333" /><path d="M9 18l7-6 7 6M9 24l7-6 7 6M9 31l7-7 7 7" stroke="#333" strokeWidth="3" /></>,
  close: <path d="M4 4l24 25M28 4L4 29" stroke="#333" strokeWidth="6" />,
  keypad: <><path d="M0 0h32v7l-3 3v22H4V10L0 7z" fill="#333" /><path d="M8 5h18" stroke="#fff" strokeWidth="3" strokeDasharray="3 1" /><path d="M9 11v17M14 11v17M19 11v17" stroke="#fff" strokeWidth="3" strokeDasharray="3 2" /><path d="M24 11v17" stroke="#47c" strokeWidth="3" strokeDasharray="3 2" /></>,
  keyboard: <><path d="M0 5h32v22H0z" fill="#333" /><path d="M4 11h24M4 16h24" stroke="#fff" strokeWidth="3" strokeDasharray="3 1" /><path d="M6 21h20" stroke="#fff" strokeWidth="3" /></>,
};

const Icon = ({ name, ...rest }) => <Svg {...rest}>{icons[name]}</Svg>;

/* ---------- data ---------- */

const menus = ['文件(F)', '编辑(E)', '视图(V)', '工作单元(C)', '机器人(R)', '示教(T)', '试运行(S)', '项目(P)', '工具(O)', '窗口(W)', '帮助(H)'];

// 'name' | ['name', width, active] | '|' separator | number = drop arrow width
const strips = [
  ['zoomIn', 'zoomOut', 'zoomWin', '|', 'center', 'plane', 'top', 'right', 'left', 'front', 'back', '|', ['video', 40], 24, '|', 'ruler', '|', 'mouse', ['photo', 44]],
  [['pendant', 46, true], 18, 'axisLock', 'axisTwo', 24, ['teachRobot', 40], 26, ['handRobot', 42], ['handRobot2', 44], 22, ['gripper', 46, true], '|', ['rec2d', 40], 26, ['play', 70], 26, 'pause', 'stop', 'eject', 'abort', ['runPanel', 46], '|', 'jogPM', 'axes', 'moveTo', 'target', ['sign', 46], ['person', 46], '|', 'shapes', 'floor', '|', ['online', 42], ['axisPrint', 54]],
  ['grid', 'doc', 'folder', 'save', '|', 'undo', 'redo', '|', ['treeView', 46, true], 'books', '|', 'help'],
];

const CYAN = '#00ffff';

const tools = ['1  (3jaw_Gripper)', '2  (Eoat2)', '3  (Eoat3)', '4  (Eoat4)', '5  (Eoat5)', '6  (Eoat6)', '7  (Eoat7)', '8  (Eoat8)', '9  (Eoat9)', '10  (Eoat10)', '254  (GROUP[1])'];

// g: one character for each outer level, '1' draws the dotted line
const tree = [
  { g: '', x: '-', icon: 'servers', label: '机器人控制器', cjk: true },
  { g: '1', x: '-', last: true, icon: 'server', label: 'C:1 - Robot Controller1', bg: CYAN },
  { g: '10', x: '-', icon: 'pendants', label: '程序', cjk: true },
  { g: '101', last: true, icon: 'prog', label: 'PROG_1', bg: CYAN },
  { g: '10', x: '-', icon: 'robot', label: 'GP: 1 - R-2000/165F-27C', bg: CYAN },
  { g: '101', x: '-', icon: 'tools', label: '工具', cjk: true },
  ...tools.map((t, i) => ({ g: '1011', icon: 'tool', label: `UT:${t}`, bg: i === 0 ? CYAN : null, last: i === tools.length - 1 })),
  { g: '101', x: '+', icon: 'frames', label: '用户坐标系', cjk: true },
  { g: '101', x: '+', icon: 'boxes', label: '防干涉区域', cjk: true },
  { g: '101', x: '+', icon: 'pipes', label: '管线', cjk: true },
  { g: '101', last: true, icon: 'target', label: '标记点', cjk: true },
  { g: '10', icon: 'files', label: '文件', cjk: true },
  { g: '10', icon: 'jobs', label: '工作', cjk: true },
  { g: '10', x: '+', last: true, icon: 'vars', label: '变量', cjk: true },
  { g: '', icon: 'machines', label: '机器', cjk: true },
  { g: '', x: '-', icon: 'fixtures', label: '工装', cjk: true },
  { g: '1', last: true, icon: 'fixture', label: 'Fixture1', bg: '#f0f0f0' },
  { g: '', x: '-', icon: 'parts', label: '工件', cjk: true },
  { g: '1', x: '+', last: true, icon: 'part', label: 'Part1' },
];

const lamps = [
  ['处理', '#0a331c', '#4f7a60'],
  ['单段', '#3a2e12', '#8a8060'],
  ['暂停', '#3c0a0c', '#956a6a'],
  ['异常', '#3c0a0c', '#956a6a'],
  ['实行', '#0a331c', '#4f7a60'],
  ['I/O', '#0a9a3e', '#fff'],
  ['运转', '#0a331c', '#4f7a60'],
  ['测试中', '#3a2e12', '#8a7440'],
];

const coords = [
  ['X', '2237.208', 'mm'],
  ['Y', '33.031', 'mm'],
  ['Z', '622.587', 'mm'],
  ['W', '-48.689', 'deg'],
  ['P', '-83.211', 'deg'],
  ['R', '49.587', 'deg'],
];

// [look, label, font size]
const keys = [
  ['dark', '1', 24], ['dark', '2', 24], ['dark', '3', 24],
  ['sky', <>MOVE<br />MENU</>, 18], ['sky', 'GROUP', 17],
  ['blue', <>-Z<small>(J6)</small></>, 20], ['blue', <>+Z<small>(J6)</small></>, 20],
  ['dark', '0', 24], ['dark', '·', 32], ['comma', <>,<span>–</span></>, 20],
  ['gray', <>SET<br />UP</>, 18], ['sky', <Percent $up><span>+%</span></Percent>, 20],
  ['blue', <>–<small>(J7)</small></>, 20], ['blue', <>+<small>(J7)</small></>, 20],
  ['diag', <>DIAG<DarkText>HELP</DarkText></>, 18], ['gray', 'POSN', 18], ['gray', 'I/O', 22],
  ['gray', 'STATUS', 15], ['sky', <Percent><span>-%</span></Percent>, 20],
  ['blue', <>–<small>(J8)</small></>, 20], ['blue', <>+<small>(J8)</small></>, 20],
];

/* ---------- parts ---------- */

const ToolStrip = ({ items }) => (
  <Strip>
    {items.map((item, i) => {
      if (item === '|') return <ToolSep key={i} />;
      if (typeof item === 'number') {
        return <ToolButton key={i} $w={item} aria-label="more"><Arrow /></ToolButton>;
      }
      const [name, w, active] = Array.isArray(item) ? item : [item];
      return (
        <ToolButton key={i} $w={w} $active={active} aria-label={name}>
          <Icon name={name} />
        </ToolButton>
      );
    })}
  </Strip>
);

const SidePanel = () => (
  <Side>
    <SideTools>
      <SideButton $w={32} aria-label="collapse"><Icon name="collapse" /></SideButton>
      <SideButton $w={76} $stack>
        <Svg s={26} h={18} v={26} vh={18}><path d="M0 9l11-9v3h14v12H11v3z" fill="#000" /></Svg>
        返回
      </SideButton>
      <SideButton $w={22} aria-label="history"><Arrow /></SideButton>
      <SideButton $w={62} $stack disabled>
        <Svg s={26} h={18} v={26} vh={18}><path d="M26 9L15 0v3H1v12h14v3z" fill="#8c8c8c" /></Svg>
        前进
      </SideButton>
      <SideButton $w={68} $stack>
        <Svg s={34} h={32}>
          <path d="M15 1l4 9 10 1-7 7 2 11-9-5-9 5 2-11-7-7 10-1z" fill="#fd6" stroke="#c80" strokeWidth="2" />
          <path d="M14 18h8v-4l9 8-9 7v-4h-8z" fill="#6d4" stroke="#382" />
        </Svg>
        添加
      </SideButton>
      <SideSep />
      <SideButton $w={54} aria-label="tree"><Icon name="treeSmall" /></SideButton>
      <SideButton $w={38} aria-label="refresh"><Icon name="refresh" /></SideButton>
      <SideButton $w={50} aria-label="help"><Icon name="question" /></SideButton>
    </SideTools>
    <TreeBox>
      <Tree>
        {tree.map(row => (
          <TreeRow key={row.label + row.icon}>
            {[...row.g].map((c, i) => <Guide key={i} $line={c === '1'} />)}
            <Branch $last={row.last}>
              {row.x && (
                <Expander aria-label={row.x}>
                  <Svg s={10} v={10}>
                    <path d={row.x === '+' ? 'M0 5h10M5 0v10' : 'M0 5h10'} stroke="#3b5aa5" strokeWidth="2" />
                  </Svg>
                </Expander>
              )}
            </Branch>
            <Icon name={row.icon} />
            <TreeLabel $cjk={row.cjk} $bg={row.bg}>{row.label}</TreeLabel>
          </TreeRow>
        ))}
      </Tree>
      <TreeScroll><Thumb $h="682px" /></TreeScroll>
    </TreeBox>
    <Tabs>
      <Tab $on>ROBOGUIDE</Tab>
      <Tab>收藏夹</Tab>
    </Tabs>
  </Side>
);

const Robot = () => (
  <g className="thin" stroke="#111" strokeWidth="2">
    {/* base */}
    <path d="M1490 985h34v48h-34z" fill="#aaa" stroke="#666" />
    <path d="M1165 975l60-35 205-10 22-60 24 50 10 60 5 90-60 15-190 25h-42l-10-55-24-45z" fill="#222" />
    <path d="M1205 1010c20-30 20-50 40-60l150 5c10 40 30 50 30 70l-50 35-130 10z" fill="url(#base)" stroke="none" />
    <path d="M1240 950c40 30 100 50 190 5M1200 1075l280-18M1385 1000l40 55M1440 970v80M1465 970v75M1235 1085v20M1210 1090h50" fill="none" />
    <path d="M1475 910l30 20M1480 930l28 35M1490 920v50M1470 950h40" fill="none" stroke="#333" />
    {/* motor */}
    <path d="M1350 697h150c28 10 28 133 0 143h-150z" fill="url(#barrel)" />
    <path d="M1500 697c-15 20-15 123 0 143" fill="none" />
    <path d="M1238 660l18-12 75 42h60l-45 20-10 130-60 20-40-90z" fill="#dede10" />
    <path d="M1262 680v150M1285 685v160M1312 690v150M1330 700v130M1350 740v70M1240 700l50 60M1262 690h40M1290 720h36" fill="none" />
    <path d="M1340 685h50l-4 12h-40z" fill="#222" />
    <path d="M1290 745l24 10v110l-30-10z" fill="#4a4a10" />
    {/* lower casting */}
    <path d="M1195 870l30-15 45 35 95-5 70-100 40 10 2 45-40 50-14 72-130 5-20-25-50-20-28-15z" fill="#e2e214" />
    <path d="M1280 850c40-10 60 10 90 8l70-70-60 105c-40 10-80 0-100-10z" fill="#77770c" />
    <path d="M1290 880l60 20M1370 895h30v25h-30zM1300 945h40v20h-40zM1420 870h12v25h-12zM1395 945v14M1402 945v14M1409 945v14M1416 945v14M1225 900l50 30M1280 910v40" fill="none" />
    <circle cx="1455" cy="808" r="20" fill="#222" />
    {/* lower joint */}
    <ellipse cx="1205" cy="790" rx="62" ry="75" fill="#e2e214" />
    <ellipse cx="1296" cy="782" rx="20" ry="26" fill="#222" />
    <path d="M1140 720l38 18-20 60-28 25-14-25 25-10z" fill="#a6a614" />
    {/* upright link */}
    <path d="M1122 330h110l-4 280 8 90-92 40-12-30z" fill="#e2e214" />
    <path d="M1122 330h12l6 400-12-30z" fill="#4a4a10" />
    <circle cx="1141" cy="460" r="7" fill="#222" />
    <circle cx="1214" cy="444" r="7" fill="#222" />
    <circle cx="1148" cy="662" r="7" fill="#222" />
    <path d="M1145 720l75-35M1235 700l20-50M1200 710h35v40h-35z" fill="#e2e214" />
    {/* elbow */}
    <path d="M1095 215l75-45 78 55-2 60-120-20z" fill="#1c1c1c" />
    <path d="M1060 200l70 10 10 120-70-30-25-50z" fill="#d8d812" />
    <path d="M1130 260c20-50 80-60 112-10l-10 20-90 20z" fill="#77770c" />
    <ellipse cx="1197" cy="300" rx="57" ry="75" fill="#e2e214" />
    <path d="M1022 160l30-55 18 80 30 30-35 65-45-40z" fill="#b4b414" />
    <path d="M1030 150l50 70M1040 130l30 90M1025 180l50 30M1060 150l-30 80M1080 190l-35 60M1020 200l60-10" fill="none" />
    <path d="M1056 108l52-38 22 14 30 78 32 22-45 32-57-22-30-50z" fill="#1e1e1e" />
    <path d="M1066 130l50-32M1076 155l55-35M1086 178l58-32M1100 192l60-28" fill="none" stroke="#444" />
    <path d="M1124 88l32 76" fill="none" stroke="#e11" strokeWidth="3" strokeDasharray="4 3" />
    <circle cx="1100" cy="207" r="14" fill="#e2e214" />
    <path d="M1090 225h35v70h-35z" fill="#e2e214" stroke="none" />
    {/* forearm */}
    <path d="M800 352l222-145 36 45-228 158z" fill="url(#tube)" />
    <path d="M832 376l196-140" fill="none" strokeWidth="3" />
    <path d="M862 302l10 18M916 262l12 16M972 220l14 18" fill="none" strokeWidth="5" />
    <path d="M755 402l48-50 34 26-6 74-40 8-45-28z" fill="#dede14" />
    <path d="M780 352c30 30 44 70 40 105M770 390c18 20 24 45 22 68" fill="none" strokeWidth="7" />
    {/* wrist */}
    <path d="M635 435l65-15 50-2 20 40-20 75-35 17-80-15z" fill="#161612" />
    <path d="M672 440l24-8M660 460v70M640 470h30M745 430l25 20-20 20" fill="none" stroke="#dd1" strokeWidth="3" />
    <ellipse cx="720" cy="505" rx="31" ry="38" fill="#dede14" />
    {/* hoses */}
    <path d="M1065 300c60 10 110-5 112 75" fill="none" stroke="#888" strokeWidth="8" />
    <path d="M1065 298c60 10 112-5 115 75" fill="none" stroke="#bbb" strokeWidth="3" />
    <path d="M1155 378h45v38h-45zM1165 378l30 30" fill="#e2e214" />
    <path d="M1225 750c10 50 0 120 45 145" fill="none" stroke="#777" strokeWidth="8" />
    <path d="M1223 750c10 50 0 120 45 145" fill="none" stroke="#aaa" strokeWidth="3" />
  </g>
);

const Gripper = () => (
  <g className="thin">
    <path d="M505 478l130-22v88l-130 5z" fill="#a6a6a6" />
    <path d="M535 470l40-15 15 30-20 12z" fill="#6e6e6e" />
    <path d="M573 380h39v75h-35z" fill="#4c4c4c" />
    <path d="M575 335l20-8 15 20v28h-36z" fill="#a51010" />
    <path d="M318 445l70-12 20 22-8 14-60-4 8 20 70 8 30 32-70 45-50-15z" fill="#9c9c9c" />
    <path d="M330 450l80 45M390 435l60 40M340 490l90-10M350 520l80-20M380 545l60-20M410 520l-40-60M385 440l70 30M400 500l50 30" stroke="#6c6c6c" strokeWidth="3" fill="none" />
    <path d="M345 470l60 10M330 505l50 6M370 555l60-6M395 470l50 20" stroke="#b4b4b4" strokeWidth="3" fill="none" />
    <path d="M298 590l140-25 5 65-145 28z" fill="#a6a6a6" />
    <path d="M437 575l40-60 5 15-42 80z" fill="#777" />
    <path d="M365 492v20M420 528h14M390 590v28" stroke="#c89030" strokeWidth="2" />
    <path d="M560 500v40M590 495v20M605 520v20" stroke="#555" strokeWidth="2" strokeDasharray="2 4" />
  </g>
);

const Scene = () => {
  const across = Array.from({ length: 30 }, (_, k) => 332 + 70 * k);
  const down = Array.from({ length: 16 }, (_, n) => 829 + 173 * (n - 4));
  return (
    <SceneSvg viewBox="665 239 1854 1172" preserveAspectRatio="xMinYMin slice">
      <defs>
        <linearGradient id="sky" x1="0" y1="0" x2="0" y2="1">
          <stop offset="0" stopColor="#0763ab" />
          <stop offset="1" stopColor="#1e6eb0" />
        </linearGradient>
        <linearGradient id="barrel" x1="0" y1="0" x2="0" y2="1">
          <stop offset="0" stopColor="#77770a" />
          <stop offset=".45" stopColor="#f6f61c" />
          <stop offset="1" stopColor="#77770a" />
        </linearGradient>
        <linearGradient id="tube" x1=".4" y1=".2" x2=".6" y2=".8">
          <stop offset="0" stopColor="#99990c" />
          <stop offset=".4" stopColor="#f8f820" />
          <stop offset="1" stopColor="#99990c" />
        </linearGradient>
        <linearGradient id="base">
          <stop offset="0" stopColor="#2a2a2a" />
          <stop offset=".5" stopColor="#666" />
          <stop offset="1" stopColor="#2a2a2a" />
        </linearGradient>
        <radialGradient id="ball" cx=".45" cy=".4">
          <stop offset="0" stopColor="#00ff00" />
          <stop offset=".6" stopColor="#00e400" />
          <stop offset="1" stopColor="#007800" />
        </radialGradient>
      </defs>
      <g stroke="#454545" strokeWidth="2">
        {across.map(y => <path key={y} d={`M665 ${y}L2665 ${y - 140}`} />)}
        {down.map(x => <path key={x} d={`M${x - 172} 240L${x + 344} 1440`} />)}
      </g>
      <path d="M665 239h1326L665 332z" fill="url(#sky)" />
      <path d="M665 332L1996 239" stroke="#454545" strokeWidth="2" />

      <svg x="740" y="640" width="700" height="440" viewBox="0 0 1568 1320" preserveAspectRatio="none" overflow="visible">
        <path d="M47 595l333-33 60 48 46 152-372 33z" fill="#b87400" />
        <path d="M47 595l67 200v467l-67-197z" fill="#8a5700" />
        <path d="M114 795l372-33v464l-372 36z" fill="#ffb000" />
        <path d="M214 425l16 45v225l-16-30z" fill="#005800" />
        <path d="M214 425l91-13 20 53-95 7z" fill="#00a000" />
        <path d="M230 470l95-5v233l-95 7z" fill="#00e400" />
        <Gripper />
        <g className="thin" fill="none">
          <path d="M269 700v442" stroke="#f00" strokeWidth="2" strokeDasharray="16 16" />
          <path d="M268 452v230" stroke="#000" strokeWidth="9" />
          <path d="M268 460v50M268 530v130" stroke="#0c0" strokeWidth="3" />
          <path d="M90 688l178-8M268 680l30 100" stroke="#000" strokeWidth="8" />
          <path d="M92 694l44-4M160 686l80-4M272 690l14 40M290 765l8 15" stroke="#0d2" strokeWidth="5" />
          <path d="M486 1120l694-68" stroke="#b5b500" strokeWidth="4" />
          <path d="M275 1136h40M360 1130l25 4M420 1122h46" stroke="#f00" strokeWidth="3" />
        </g>
        <Robot />
        <g className="thin" fill="none">
          <path d="M1208 1046h48M1280 1041h35" stroke="#f00" strokeWidth="4" />
          <path d="M558 262l-71 213" stroke="#0f2" strokeWidth="3" />
          <path d="M568 462h12M573 462v22M635 452v22M632 452h10" stroke="#fff" strokeWidth="2" />
        </g>
        <ellipse cx="473" cy="520" rx="35" ry="50" fill="url(#ball)" />
        <path d="M440 520l30 5-15 30z" fill="#777" />
        <rect x="553" y="235" width="18" height="27" rx="6" fill="#fff" />
      </svg>

      <g fill="#fff">
        <text x="858" y="786">Z</text>
        <text x="773" y="871">X</text>
        <text x="873" y="899">Y</text>
        <text x="1076" y="808" className="mono">]</text>
        <text x="1029" y="716" className="mono">P [  1 ]</text>
      </g>
      <text x="969" y="769" fill="#0d1">2000mm/sec</text>
      <g fill="#ff0">
        <text x="858" y="944">Z 1000.0</text>
        <text x="857" y="1020">Y 34.6</text>
        <text x="1091" y="1004">X 2784.0</text>
      </g>

      <path d="M1448 1240h48v80l-41-1z" fill="#00dc00" />
      <path d="M1448 1240h7v79l-7-14z" fill="#006400" />
      <path d="M1423 1295h25v10l7 14h41v8l-59 4z" fill="#5c5c5c" />
      <path d="M1423 1295l14 36v13l-14-30z" fill="#333" />
      <path d="M1437 1331l59-4v16l-59 1z" fill="#a8a8a8" />

      <path d="M710 1368v42h-28" stroke="#00f" strokeWidth="2" fill="none" />
      <g fill="#00f">
        <text x="708" y="1367">Z</text>
        <text x="666" y="1403">X</text>
        <text x="716" y="1409">Y</text>
      </g>
    </SceneSvg>
  );
};

const TeachPendant = () => (
  <Pendant>
    <PendantHead>
      <Svg s={30} h={46} v={30} vh={46}>
        <path d="M2 8h24v18l-4 3H6l-4-3z" fill="#222" />
        <path d="M3 9h22v14H3z" fill="#5bb3ae" />
        <path d="M5 25h18v20H5z" fill="#fff" />
        <path d="M8 31h12M8 36h12M8 41h12" stroke="#57b6e8" strokeWidth="3" strokeDasharray="5 2" />
        <circle cx="3" cy="4" r="3" fill="#222" />
        <circle cx="25" cy="4" r="3" fill="#d33" />
      </Svg>
      <PendantMenu>Robot Controller1 <Arrow /></PendantMenu>
      <PendantMenu>P <Arrow /></PendantMenu>
      <PendantToggle $first aria-label="keypad"><Icon name="keypad" s={34} /></PendantToggle>
      <PendantToggle aria-label="keyboard"><Icon name="keyboard" s={36} /></PendantToggle>
      <PendantButtons>
        {['reload', 'screenUp', 'popout', 'question', 'close'].map((n, i) => (
          <PendantButton key={n} $gap={i === 2} aria-label={n}>
            <Icon name={n} s={n === 'close' ? 28 : 34} />
          </PendantButton>
        ))}
      </PendantButtons>
    </PendantHead>
    <Screen>
      <Lamps>
        {lamps.map(([t, bg, color]) => <Lamp key={t} $bg={bg} $color={color}>{t}</Lamp>)}
      </Lamps>
      <Message>
        SYST-179 SHIFT-RESET<big>已释放</big>{'\n'}
        PROG_1 <big>行</big>0 <Flag $bg="#fd0">T2</Flag> <big>中止</big> <Flag $bg="#fff"><big>关节</big></Flag>
      </Message>
      <Override>100</Override>
    </Screen>
    <Keypad>
      {keys.map(([look, label, size], i) => (
        <Key key={i} $look={look} $size={size} $lh={17}>{label}</Key>
      ))}
    </Keypad>
  </Pendant>
);

const Choice = ({ label, id, value, w, ml, off }) => (
  <SelectWrap $w={w} $ml={ml} $off={off}>
    <select id={id} aria-label={label} disabled={off} defaultValue={value}>
      <option>{value}</option>
    </select>
    <ChevronDown size={22} strokeWidth={1} color={off ? '#aaa' : '#333'} />
  </SelectWrap>
);

const ProgramEditor = () => {
  const [form, setForm] = useState('user');
  return (
    <Editor>
      <EditorTitle>
        <Icon name="editorApp" />
        <div>编辑仿真程序<span> - Robot Controller1 - PROG_1</span></div>
      </EditorTitle>
      <EditorBody>
        <BigTools>
          <BigButton $w={88} $cjk $marked><Icon name="record" s={42} h={36} v={42} vh={36} />记录</BigButton>
          <BigDrop $w={42} aria-label="record options"><Arrow /></BigDrop>
          <BigButton $w={84}><Icon name="axes" s={32} />Touchup</BigButton>
          <BigDrop $w={38} aria-label="touchup options"><Arrow /></BigDrop>
          <BigSep />
          <BigButton $w={88}><Icon name="moveTo" s={44} />MoveTo</BigButton>
          <BigDrop aria-label="move options"><Arrow /></BigDrop>
          <BigSep />
          <BigButton $w={116} $cjk><Icon name="fwd" s={46} h={42} v={46} vh={42} />前进</BigButton>
          <BigButton $w={116} $cjk><Icon name="bwd" s={46} h={42} v={46} vh={42} />后退</BigButton>
          <BigSep />
          <BigButton $w={104} $cjk><Icon name="instr" s={42} v={44} />指令</BigButton>
          <BigDrop aria-label="instruction options"><Arrow /></BigDrop>
          <BigSep />
          <BigButton $w={96} disabled><Icon name="openHand" s={22} h={40} v={22} vh={42} />None</BigButton>
          <BigDrop disabled aria-label="open options"><Arrow $color="#777" /></BigDrop>
          <BigButton $w={96} disabled><Icon name="closeHand" s={22} h={40} v={22} vh={42} />None</BigButton>
          <BigDrop disabled aria-label="close options"><Arrow $color="#777" /></BigDrop>
        </BigTools>
        <SmallTools>
          <SmallButton aria-label="up"><Svg s={14} h={8} v={14} vh={8}><path d="M7 0l7 8H0z" fill="#000" /></Svg></SmallButton>
          <SmallButton aria-label="down"><Svg s={14} h={8} v={14} vh={8}><path d="M7 8l7-8H0z" fill="#000" /></Svg></SmallButton>
          <SmallButton aria-label="renumber"><Icon name="renumber" s={40} v={40} /></SmallButton>
          <SmallSep />
          <SmallButton aria-label="previous"><Svg s={8} h={14} v={8} vh={14}><path d="M0 7l8-7v14z" fill="#000" /></Svg></SmallButton>
          <SmallButton aria-label="next"><Svg s={8} h={14} v={8} vh={14}><path d="M8 7L0 0v14z" fill="#000" /></Svg></SmallButton>
          <SmallSep />
          <SmallButton aria-label="delete"><Icon name="del" s={30} /></SmallButton>
          <SmallSep />
          <SmallButton $active $w={52} aria-label="move to"><Icon name="moveTo" /></SmallButton>
          <SmallButton aria-label="pop out"><Icon name="popout" /></SmallButton>
          <SmallButton aria-label="help"><Icon name="question" /></SmallButton>
          <Picker>
            <Icon name="server" s={28} />
            <select aria-label="controller"><option>Robot Controller1</option></select>
            <ChevronDown className="lucide" size={22} strokeWidth={1} />
          </Picker>
          <Picker $grow>
            <Icon name="prog" />
            <select aria-label="program"><option>PROG_1</option></select>
          </Picker>
        </SmallTools>
        <ListArea>
          <ZoomColumn>
            <ZoomButton aria-label="zoom in"><Icon name="zoomIn" /></ZoomButton>
            <ZoomButton $pressed aria-label="zoom out"><Icon name="zoomOut" /></ZoomButton>
          </ZoomColumn>
          <Lines>
            <PlainLine>1: L P[ 1] 2000mm/sec FINE</PlainLine>
            <EditLine>
              <LineNo>2:</LineNo>
              <Form>
                <FieldRow $mb={12}>
                  <Choice label="motion" value="L" w={104} />
                  <PointButton type="button">P[ 2]</PointButton>
                  <TextBox $w={80} $ml={58} aria-label="speed" defaultValue="2000" />
                  <Unit>mm/sec</Unit>
                  <Choice label="termination" value="FINE" w={136} ml={18} />
                  <Choice label="acceleration" value="(no ACC)" w={160} ml={58} />
                </FieldRow>
                <FieldRow $mb={8}>
                  <Choice label="offset" value="(No OFFSET)" w={220} />
                </FieldRow>
                <FieldRow $mb={8}>
                  <GroupLabel htmlFor="group">组</GroupLabel>
                  <Choice id="group" value="GP: 1 - R-2000/165F-27C" w={598} off />
                </FieldRow>
                <Rule />
                <PositionRow>
                  <PositionTitle>位置的形式</PositionTitle>
                  <RadioLabel>
                    <input type="radio" name="form" checked={form === 'joint'} onChange={() => setForm('joint')} />各轴
                  </RadioLabel>
                  <RadioLabel $off>
                    <input type="radio" name="form" disabled />世界
                  </RadioLabel>
                  <RadioLabel>
                    <input type="radio" name="form" checked={form === 'user'} onChange={() => setForm('user')} />用户
                  </RadioLabel>
                  <PositionEnd />
                </PositionRow>
                <FieldRow $mb={12}>
                  <OffLabel htmlFor="ut" $w={44}>UT:</OffLabel>
                  <Choice id="ut" value="1" w={80} off />
                  <OffLabel htmlFor="uf" $w={48}>{' '}UF:</OffLabel>
                  <Choice id="uf" value="0" w={80} off />
                  <ConfigLabel>CONFIG</ConfigLabel>
                  <FlipButton type="button" $on>N</FlipButton>
                  <FlipButton type="button">U</FlipButton>
                  <FlipButton type="button">T</FlipButton>
                  ,<TextBox $w={36} $ml={2} aria-label="turn 1" defaultValue="0" />
                  ,<TextBox $w={36} $ml={4} aria-label="turn 2" defaultValue="0" />
                  ,<TextBox $w={36} $ml={4} aria-label="turn 3" defaultValue="0" />
                </FieldRow>
                <Rule />
                <Coords>
                  {coords.map(([name, value, unit]) => (
                    <Coord key={name}>
                      <span>{name}</span>
                      <TextBox $w={116} defaultValue={value} />
                      <Unit>{unit}</Unit>
                    </Coord>
                  ))}
                </Coords>
              </Form>
            </EditLine>
          </Lines>
        </ListArea>
      </EditorBody>
    </Editor>
  );
};

const App = () => {
  return (
    <Page>
      <GlobalStyle />
      <TitleBar>
        <Icon name="app" s={30} h={28} />
        <AppTitle>ROBOGUIDE Classic - HandlingPRO3</AppTitle>
        <CaptionButton aria-label="minimize"><Svg s={20} v={20}><path d="M0 11h20" stroke="#000" strokeWidth="2" /></Svg></CaptionButton>
        <CaptionButton aria-label="restore">
          <Svg s={20} v={20}><path d="M1 5h14v14H1zM5 5V1h14v14h-4" stroke="#000" strokeWidth="2" /></Svg>
        </CaptionButton>
        <CaptionButton aria-label="close"><Svg s={20} v={20}><path d="M1 1l18 18M19 1L1 19" stroke="#000" strokeWidth="2" /></Svg></CaptionButton>
      </TitleBar>
      <MenuBar>
        {menus.map(m => <MenuItem key={m}>{m}</MenuItem>)}
      </MenuBar>
      <ToolArea>
        {strips.map((items, i) => <ToolStrip key={i} items={items} />)}
      </ToolArea>
      <Main>
        <SidePanel />
        <View>
          <Scene />
          <TeachPendant />
          <ProgramEditor />
        </View>
        <Rail><Thumb /></Rail>
      </Main>
      <StatusBar />
      <Watermark>CSDN @axzg</Watermark>
    </Page>
  );
};

export default App;
